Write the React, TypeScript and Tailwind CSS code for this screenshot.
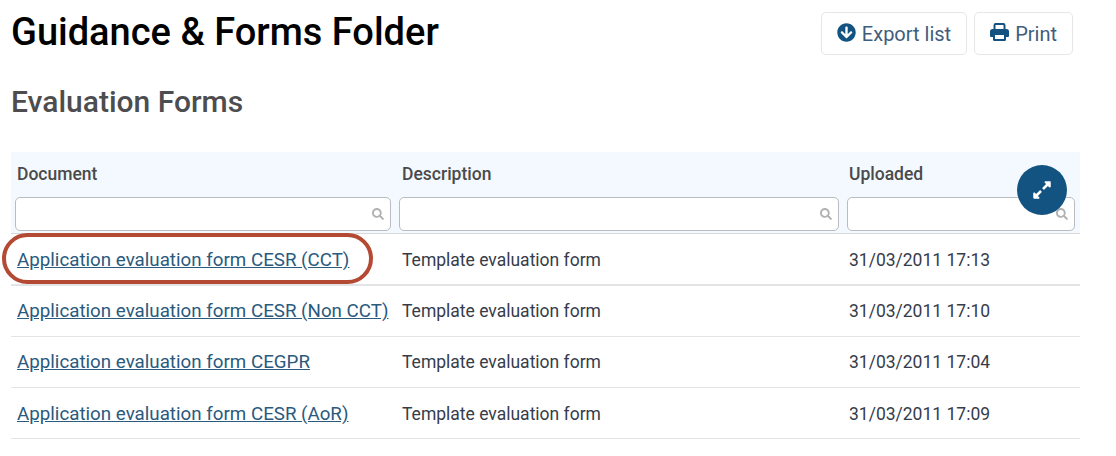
import { FaArrowCircleDown, FaExpandAlt, FaSearch } from 'react-icons/fa';

const rows = [
  { name: 'Application evaluation form CESR (CCT)', time: '17:13', rowClass: 'h-[52px] border-b-2 border-[#e3e4e6] pt-[2px]' },
  { name: 'Application evaluation form CESR (Non CCT)', time: '17:10', rowClass: 'h-[51px] border-b border-[#e3e4e6]' },
  { name: 'Application evaluation form CEGPR', time: '17:04', rowClass: 'h-[51px] border-b border-[#e3e4e6]' },
  { name: 'Application evaluation form CESR (AoR)', time: '17:09', rowClass: 'h-[51px] border-b border-[#e3e4e6] pt-[2px]' },
];

const columns = [
  { label: 'Document', labelClass: 'pl-[2px]' },
  { label: 'Description', labelClass: 'pl-[3px]' },
  { label: 'Uploaded', labelClass: 'pl-[2px]' },
];

const PrintIcon = () => (
  <svg viewBox="0 0 19 18" className="-mt-[3px] h-[18px] w-[19px] text-[#135381]">
    <path d="M4.5 7V2.2C4.500 1.500 5 1 5.700 1h7.600c.7 0 1.200.5 1.200 1.200V7" fill="none" stroke="currentColor" strokeWidth="2" />
    <path d="M2.500 6h14A2.500 2.500 0 0 1 19 8.500V13a1 1 0 0 1-1 1h-2v-3H3v3H1a1 1 0 0 1-1-1V8.500A2.500 2.500 0 0 1 2.500 6z" fill="currentColor" />
    <path d="M4 11h11v5.800c0 .2-.2.2-.4.2H4.400c-.2 0-.4 0-.4-.2z" fill="none" stroke="currentColor" strokeWidth="2" />
  </svg>
);

const FilterInput = () => (
  <div className="flex h-[34px] items-center justify-end rounded-[5px] border border-[#b9bcc0] bg-white pr-[6px]">
    <FaSearch className="text-[12px] text-[#b0b2b4]" />
  </div>
);

export default function App() {
  return (
    <div className="relative h-[456px] w-[1116px] overflow-hidden bg-white font-['Roboto',sans-serif]">
      <div className="ml-[11px] w-[1069px]">
        <div className="flex items-start justify-between pr-[7px] pt-[12px]">
          <h1 className="text-[38px] font-medium leading-[40px] text-black">Guidance &amp; Forms Folder</h1>
          <div className="flex gap-[7px]">
            <button className="flex h-[43px] items-center gap-[6px] rounded-[5px] border border-[#e4e6e8] bg-white pl-[15px] pr-[15px] text-[20px] text-[#3f5d7c]">
              <FaArrowCircleDown className="-mt-[3px] text-[19px] text-[#135381]" />
              Export list
            </button>
            <button className="flex h-[43px] items-center gap-[6px] rounded-[5px] border border-[#e4e6e8] bg-white pl-[15px] pr-[15px] text-[20px] text-[#3f5d7c]">
              <PrintIcon />
              Print
            </button>
          </div>
        </div>
        <h2 className="mt-[27px] text-[30px] font-medium leading-[40px] text-[#4d4d4f]">Evaluation Forms</h2>

        <div className="relative mt-[30px]">
          <div className="grid grid-cols-[384px_448px_237px] border-b border-[#d6d8da] bg-[#f3f9fe]">
            {columns.map((col) => (
              <div key={col.label} className="flex h-[81px] flex-col pl-[4px] pr-[4px] last:pr-[5px]">
                <span className={`mt-[11px] h-[34px] text-[17.5px] font-medium leading-[22px] text-[#4a4a4c] ${col.labelClass}`}>{col.label}</span>
                <FilterInput />
              </div>
            ))}
          </div>
          {rows.map((row) => (
            <div key={row.name} className={`grid grid-cols-[384px_448px_237px] items-center text-[17.5px] text-[#363c4a] ${row.rowClass}`}>
              <a className="pl-[6px] text-[18.75px] text-[#2a5a7e] underline">{row.name}</a>
              <span className="pl-[7px]">Template evaluation form</span>
              <span className="pl-[6px]">31/03/2011 {row.time}</span>
            </div>
          ))}
          <div className="absolute left-[1006px] top-[13px] flex h-[50px] w-[50px] items-center justify-center rounded-full bg-[#135381] text-[20px] text-white">
            <FaExpandAlt />
          </div>
          <div className="absolute left-[-9px] top-[81px] h-[51px] w-[371px] rounded-[26px] border-[4px] border-[#b44a33]" />
        </div>
      </div>
    </div>
  );
}
